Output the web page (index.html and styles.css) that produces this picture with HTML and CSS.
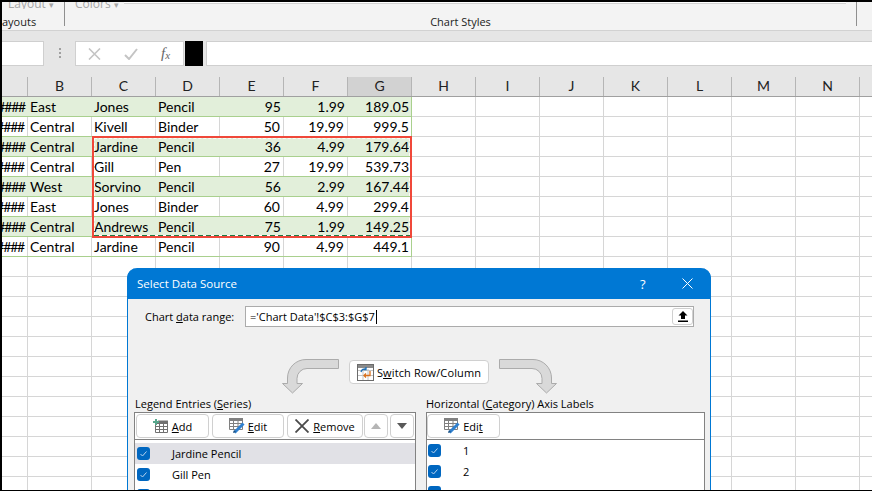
FILE: index.html
```html
<!DOCTYPE html>
<html lang="en">
<head>
<meta charset="utf-8">
<title>Select Data Source</title>
<link rel="stylesheet" href="styles.css">
</head>
<body>
<div class="app">
  <section class="ribbon">
    <div class="group group-layouts">
      <span class="cut-label">Layout <i class="caret">▾</i></span>
      <span class="group-name">ayouts</span>
    </div>
    <div class="group group-styles">
      <div class="gallery-row">
        <span class="cut-label colors">Colors <i class="caret">▾</i></span>
        <div class="gallery"></div>
      </div>
      <span class="group-name">Chart Styles</span>
    </div>
  </section>

  <section class="formula-bar">
    <div class="name-box"></div>
    <div class="grip"></div>
    <div class="fx-box">
      <svg class="fx-icon" width="13" height="12" viewBox="0 0 13 12"><path d="M1 .5l11 11M12 .5l-11 11" stroke="#c4c4c4" stroke-width="1.6" fill="none"/></svg>
      <svg class="fx-icon" width="14" height="12" viewBox="0 0 14 12"><path d="M1 7l4 4 8-10" stroke="#c4c4c4" stroke-width="2" fill="none"/></svg>
      <span class="fx">f<sub>x</sub></span>
    </div>
    <div class="swatch"></div>
    <div class="formula-input"></div>
  </section>

  <section class="sheet">
    <div class="col-heads">
      <div class="col-head col-a"></div>
      <div class="col-head">B</div><div class="col-head">C</div><div class="col-head">D</div>
      <div class="col-head">E</div><div class="col-head">F</div><div class="col-head active">G</div>
      <div class="col-head">H</div><div class="col-head">I</div><div class="col-head">J</div>
      <div class="col-head">K</div><div class="col-head">L</div><div class="col-head">M</div>
      <div class="col-head">N</div>
    </div>
    <div class="cells">
      <div class="row band"><span class="c hash">####</span><span class="c">East</span><span class="c">Jones</span><span class="c">Pencil</span><span class="c n">95</span><span class="c n">1.99</span><span class="c n">189.05</span></div>
      <div class="row"><span class="c hash">####</span><span class="c">Central</span><span class="c">Kivell</span><span class="c">Binder</span><span class="c n">50</span><span class="c n">19.99</span><span class="c n">999.5</span></div>
      <div class="row band"><span class="c hash">####</span><span class="c">Central</span><span class="c">Jardine</span><span class="c">Pencil</span><span class="c n">36</span><span class="c n">4.99</span><span class="c n">179.64</span></div>
      <div class="row"><span class="c hash">####</span><span class="c">Central</span><span class="c">Gill</span><span class="c">Pen</span><span class="c n">27</span><span class="c n">19.99</span><span class="c n">539.73</span></div>
      <div class="row band"><span class="c hash">####</span><span class="c">West</span><span class="c">Sorvino</span><span class="c">Pencil</span><span class="c n">56</span><span class="c n">2.99</span><span class="c n">167.44</span></div>
      <div class="row"><span class="c hash">####</span><span class="c">East</span><span class="c">Jones</span><span class="c">Binder</span><span class="c n">60</span><span class="c n">4.99</span><span class="c n">299.4</span></div>
      <div class="row band"><span class="c hash">####</span><span class="c">Central</span><span class="c">Andrews</span><span class="c">Pencil</span><span class="c n">75</span><span class="c n">1.99</span><span class="c n">149.25</span></div>
      <div class="row"><span class="c hash">####</span><span class="c">Central</span><span class="c">Jardine</span><span class="c">Pencil</span><span class="c n">90</span><span class="c n">4.99</span><span class="c n">449.1</span></div>
    </div>
    <div class="selection"><div class="ants"></div></div>
  </section>

  <section class="dialog">
    <header class="dialog-title">
      <span class="dialog-name">Select Data Source</span>
      <span class="help">?</span>
      <svg class="close" width="11" height="11" viewBox="0 0 11 11"><path d="M.5.5l10 10M10.500.5l-10 10" stroke="#fff" stroke-width="1" fill="none"/></svg>
    </header>
    <div class="range-row">
      <label class="range-label">Chart <u>d</u>ata range:</label>
      <div class="range-input">
        <span class="range-value">='Chart Data'!$C$3:$G$7</span>
        <button class="collapse" type="button">
          <svg width="10" height="11" viewBox="0 0 10 11"><path d="M5 0L9.500 4.500H7V8H3V4.500H.5zM0 9.500h10V11H0z" fill="#000"/></svg>
        </button>
      </div>
    </div>
    <div class="switch-row">
      <svg class="bend" width="58" height="35" viewBox="0 0 58 35"><path transform="translate(1 0)" d="M56.500.5V9.500H25a10 10 0 0 0-10 10v5h5.500L10.500 34 .5 24.500H5.500V19A18.500 18.500 0 0 1 24 .5z" fill="#d9d9d9" stroke="#ababab"/></svg>
      <button class="btn switch" type="button">
        <svg width="17" height="17" viewBox="0 0 17 17"><rect x=".5" y=".5" width="16" height="16" fill="#fff" stroke="#6b6b6b"/><path d="M1 6.500h15M1 11.500h15M6 5v11M11 5v11" stroke="#c4c4c4"/><rect x="1" y="1" width="15" height="3" fill="#8a8a8a"/><path d="M4 8a4 4 0 0 1 5-3M9 3v2.500H6.500" stroke="#1f6fb5" stroke-width="1.300" fill="none"/><path d="M13 7v4.500H7M9 9.500l-2 2 2 2" stroke="#d9701c" stroke-width="1.300" fill="none"/></svg>
        <span>S<u>w</u>itch Row/Column</span>
      </button>
      <svg class="bend" width="58" height="35" viewBox="0 0 58 35"><path transform="matrix(-1 0 0 1 58 0)" d="M57.500.5V9.500H25a10 10 0 0 0-10 10v5h5.500L10.500 34 .5 24.500H5.500V19A18.500 18.500 0 0 1 24 .5z" fill="#d9d9d9" stroke="#ababab"/></svg>
    </div>
    <div class="panels">
      <div class="panel panel-series">
        <div class="panel-label">Legend Entries (<u>S</u>eries)</div>
        <div class="panel-box">
          <div class="toolbar">
            <button class="btn tool t-add" type="button">
              <svg width="15" height="14" viewBox="0 0 15 14"><path d="M2.500 4.500h12v9h-12zM2.500 7.500h12M2.500 10.500h12M6.500 4.500v9M10.500 4.500v9" stroke="#707070" fill="#fff"/><path d="M5 1.500h10V5H5z" fill="#707070"/><path d="M3 0v6M0 3h6" stroke="#58a68c" stroke-width="2"/></svg>
              <span><u>A</u>dd</span>
            </button>
            <button class="btn tool t-edit" type="button">
              <svg width="16" height="16" viewBox="0 0 16 16"><path d="M.5 .5h13v11H.5zM.5 5.500h13M.5 8.500h13M4.500 3v9M9 3v9" stroke="#808080" fill="#fff"/><path d="M0 0h14v3H0z" fill="#808080"/><path d="M14.500 5.500l-9 9" stroke="#2f80cf" stroke-width="3" fill="none"/><path d="M4 15l1-3 2 2z" fill="#1b4f80"/></svg>
              <span><u>E</u>dit</span>
            </button>
            <button class="btn tool t-remove" type="button">
              <svg width="14" height="14" viewBox="0 0 14 14"><path d="M.5.5l13 13M13.500.5l-13 13" stroke="#4a4a4a" stroke-width="1.800" fill="none"/></svg>
              <span><u>R</u>emove</span>
            </button>
            <button class="btn tool t-move" type="button"><svg width="10" height="6" viewBox="0 0 10 6"><path d="M5 0l5 6H0z" fill="#b5b5b5"/></svg></button>
            <button class="btn tool t-move" type="button"><svg width="10" height="6" viewBox="0 0 10 6"><path d="M0 0h10L5 6z" fill="#595959"/></svg></button>
          </div>
          <ul class="list list-series">
            <li class="item selected"><span class="check"><svg width="7" height="6" viewBox="0 0 7 6"><path d="M.5 3l2 2 4-4.500" stroke="#b9d4ee" fill="none"/></svg></span><span class="item-text">Jardine Pencil</span></li>
            <li class="item"><span class="check"><svg width="7" height="6" viewBox="0 0 7 6"><path d="M.5 3l2 2 4-4.500" stroke="#b9d4ee" fill="none"/></svg></span><span class="item-text">Gill Pen</span></li>
            <li class="item"><span class="check"></span></li>
          </ul>
        </div>
      </div>
      <div class="panel panel-axis">
        <div class="panel-label">Horizontal (<u>C</u>ategory) Axis Labels</div>
        <div class="panel-box">
          <div class="toolbar">
            <button class="btn tool t-axis-edit" type="button">
              <svg width="16" height="16" viewBox="0 0 16 16"><path d="M.5 .5h13v11H.5zM.5 5.500h13M.5 8.500h13M4.500 3v9M9 3v9" stroke="#808080" fill="#fff"/><path d="M0 0h14v3H0z" fill="#808080"/><path d="M14.500 5.500l-9 9" stroke="#2f80cf" stroke-width="3" fill="none"/><path d="M4 15l1-3 2 2z" fill="#1b4f80"/></svg>
              <span>Edi<u>t</u></span>
            </button>
          </div>
          <ul class="list list-axis">
            <li class="item"><span class="check"><svg width="7" height="6" viewBox="0 0 7 6"><path d="M.5 3l2 2 4-4.500" stroke="#b9d4ee" fill="none"/></svg></span><span class="item-text">1</span></li>
            <li class="item"><span class="check"><svg width="7" height="6" viewBox="0 0 7 6"><path d="M.5 3l2 2 4-4.500" stroke="#b9d4ee" fill="none"/></svg></span><span class="item-text">2</span></li>
            <li class="item"><span class="check"></span></li>
          </ul>
        </div>
      </div>
    </div>
  </section>
</div>
</body>
</html>
```

FILE: styles.css
```css
* { box-sizing: border-box; }
html, body { margin: 0; height: 100%; overflow: hidden; background: #000; }
body { font-family: "Open Sans", "Noto Sans", sans-serif; color: #000; }

.app {
  position: relative;
  width: 872px;
  height: 491px;
  border-top: 2px solid #000;
  border-left: 2px solid #000;
  border-bottom: 1px solid #000;
  background: #fff;
  overflow: hidden;
  display: flex;
  flex-direction: column;
}

/* Ribbon */
.ribbon {
  height: 29px;
  flex: none;
  display: flex;
  background: #f3f3f3;
  border-bottom: 1px solid #d2d2d2;
  font-size: 11px;
}
.group { height: 24px; position: relative; display: flex; flex-direction: column; }
.group-layouts { width: 63px; border-right: 1px solid #8f8f8f; }
.group-styles { width: 792px; border-right: 1px solid #8f8f8f; }
.cut-label { flex: none; height: 7px; line-height: 4px; color: #a6a6a6; padding-left: 6px; font-size: 12px; white-space: nowrap; overflow: hidden; display: block; }
.cut-label .caret { font-style: normal; font-size: 9px; }
.cut-label.colors { padding-left: 10px; width: 59px; }
.gallery-row { flex: none; display: flex; height: 7px; }
.gallery { width: 722px; height: 2px; background: #fff; border-bottom: 1px solid #d2d2d2; }
.group-name { margin-top: 5px; line-height: 16px; color: #222; white-space: nowrap; }
.group-styles .group-name { text-align: center; }

/* Formula bar */
.formula-bar {
  height: 46px;
  flex: none;
  background: #e6e6e6;
  display: flex;
  align-items: flex-start;
  padding-top: 10px;
}
.name-box { width: 42px; height: 25px; background: #fff; border: 1px solid #cfcfcf; border-left: 0; }
.grip { width: 2px; height: 10px; margin: 7px 14px 0 15px; border-left: 2px dotted #a0a0a0; }
.fx-box {
  width: 109px; height: 25px;
  background: #fff; border: 1px solid #d0d0d0;
  display: flex; align-items: center; padding-left: 12px;
}
.fx-icon + .fx-icon { margin-left: 23px; }
.fx { margin-left: 23px; font: italic 15px/1 "Liberation Serif", serif; color: #666; }
.fx sub { font-size: 11px; vertical-align: -1px; line-height: 0; }
.swatch { width: 18px; height: 25px; background: #000; margin-left: 1px; }
.formula-input { flex: 1; height: 25px; margin-left: 3px; background: #fff; border: 1px solid #cfcfcf; border-right: 0; }

/* Sheet */
.sheet {
  position: relative;
  flex: 1;
  font-family: Lato, "Open Sans", sans-serif;
  font-size: 14px;
}
.col-heads { display: flex; height: 20px; background: #e6e6e6; border-bottom: 1px solid #a0a0a0; }
.col-head { width: 64px; flex: none; height: 19px; line-height: 18px; text-align: center; border-right: 1px solid #b5b5b5; color: #222; }
.col-head.col-a { width: 26px; }
.col-head.active { background: #d2d2d2; }
.cells {
  height: 400px;
  background-image:
    linear-gradient(to right, transparent 63px, #d6d6d6 63px),
    linear-gradient(to bottom, transparent 19px, #d6d6d6 19px);
  background-size: 64px 100%, 100% 20px;
  background-position: 26px 0, 0 0;
}
.row { display: grid; grid-template-columns: 26px repeat(6, 64px); width: 410px; height: 20px; background: #fff; border-bottom: 1px solid #a9d08e; border-right: 1px solid #a9d08e; line-height: 19px; }
.row.band { background: #e2efda; }
.c { padding: 0 2px; white-space: nowrap; overflow: hidden; height: 19px; }
.row:not(.band) .c { border-right: 1px solid #d6d6d6; }
.row .c:last-child { border-right: 0; }
.c.n { text-align: right; padding-right: 3px; }
.c.hash { direction: rtl; padding: 0 3px 0 0; letter-spacing: -1.2px; }

.selection { position: absolute; left: 90px; top: 59px; width: 320px; height: 102px; border: 2px solid #f0483a; pointer-events: none; }
.ants { position: absolute; inset: 0; border: 1px dashed rgba(255,255,255,.8); }
.ants::after {
  content: "";
  position: absolute;
  left: -1px; right: -1px; bottom: -1px;
  height: 1px;
  background: repeating-linear-gradient(to right, #1f7a45 0 5px, #fff 5px 8px);
}

/* Dialog */
.dialog {
  position: absolute;
  left: 125px;
  top: 266px;
  width: 584px;
  height: 230px;
  background: #f0f0f0;
  border: 1px solid #0078d4;
  border-top: 0;
  border-radius: 10px 10px 0 0;
  font-size: 11px;
}
.dialog-title {
  height: 31px;
  margin: 0 -1px;
  padding-left: 10px;
  background: #0078d4;
  border-radius: 10px 10px 0 0;
  color: #fff;
  display: flex;
  align-items: center;
}
.dialog-name { font-size: 11.5px; flex: 1; }
.help { font-size: 13px; width: 42px; }
.close { margin-right: 18px; }

.range-row { display: flex; align-items: center; margin-top: 7px; padding-left: 17px; height: 21px; }
.range-label { width: 100px; flex: none; }
.range-input { width: 449px; height: 21px; background: #fff; border: 1px solid #ababab; position: relative; display: flex; align-items: center; padding-left: 4px; }
.range-value { border-right: 1px solid #000; line-height: 14px; padding-right: 1px; white-space: nowrap; }
.collapse { position: absolute; right: 0; top: 1px; width: 21px; height: 17px; padding: 0; background: #fff; border: 1px solid #d0d0d0; border-radius: 3px; display: flex; align-items: center; justify-content: center; }

.switch-row { display: flex; justify-content: center; align-items: flex-start; gap: 10px; margin-top: 32px; height: 35px; }
.bend { flex: none; }
.btn { font: inherit; color: #000; background: #fff; border: 1px solid #d0d0d0; border-radius: 4px; padding: 0; display: flex; align-items: center; justify-content: center; }
.switch { width: 140px; height: 24px; margin-top: 1px; gap: 3px; letter-spacing: .12px; }

.panels { display: flex; gap: 10px; padding-left: 6px; margin-top: 3px; }
.panel { flex: none; }
.panel-series { width: 282px; }
.panel-axis { width: 279px; }
.panel-label { height: 15px; line-height: 13px; padding-left: 1px; white-space: nowrap; }
.panel-axis .panel-label { padding-left: 0; }
.panel-box { border: 1px solid #828282; height: 90px; background: #fff; }
.toolbar { display: flex; height: 27px; padding: 1px 1px 0; border-bottom: 1px solid #828282; gap: 3px; }
.panel-axis .toolbar { padding-left: 0; }
.tool { height: 24px; gap: 4px; }
.t-add { width: 73px; }
.t-edit { width: 72px; gap: 3px; }
.t-remove { width: 76px; margin-right: -2px; }
.t-move { width: 24px; }
.t-move + .t-move { margin-left: -1px; }
.t-axis-edit { width: 73px; gap: 3px; }

.list { list-style: none; margin: 0; padding: 0; }
.list-series { padding-top: 3px; }
.item { height: 21px; display: flex; align-items: center; padding-left: 2px; }
.list-axis .item { padding-left: 1px; }
.item.selected { background: #e1e1e6; }
.check { width: 13px; height: 13px; flex: none; background: #0067c0; border-radius: 3px; display: flex; align-items: center; justify-content: center; }
.item-text { margin-left: 22px; }
```
